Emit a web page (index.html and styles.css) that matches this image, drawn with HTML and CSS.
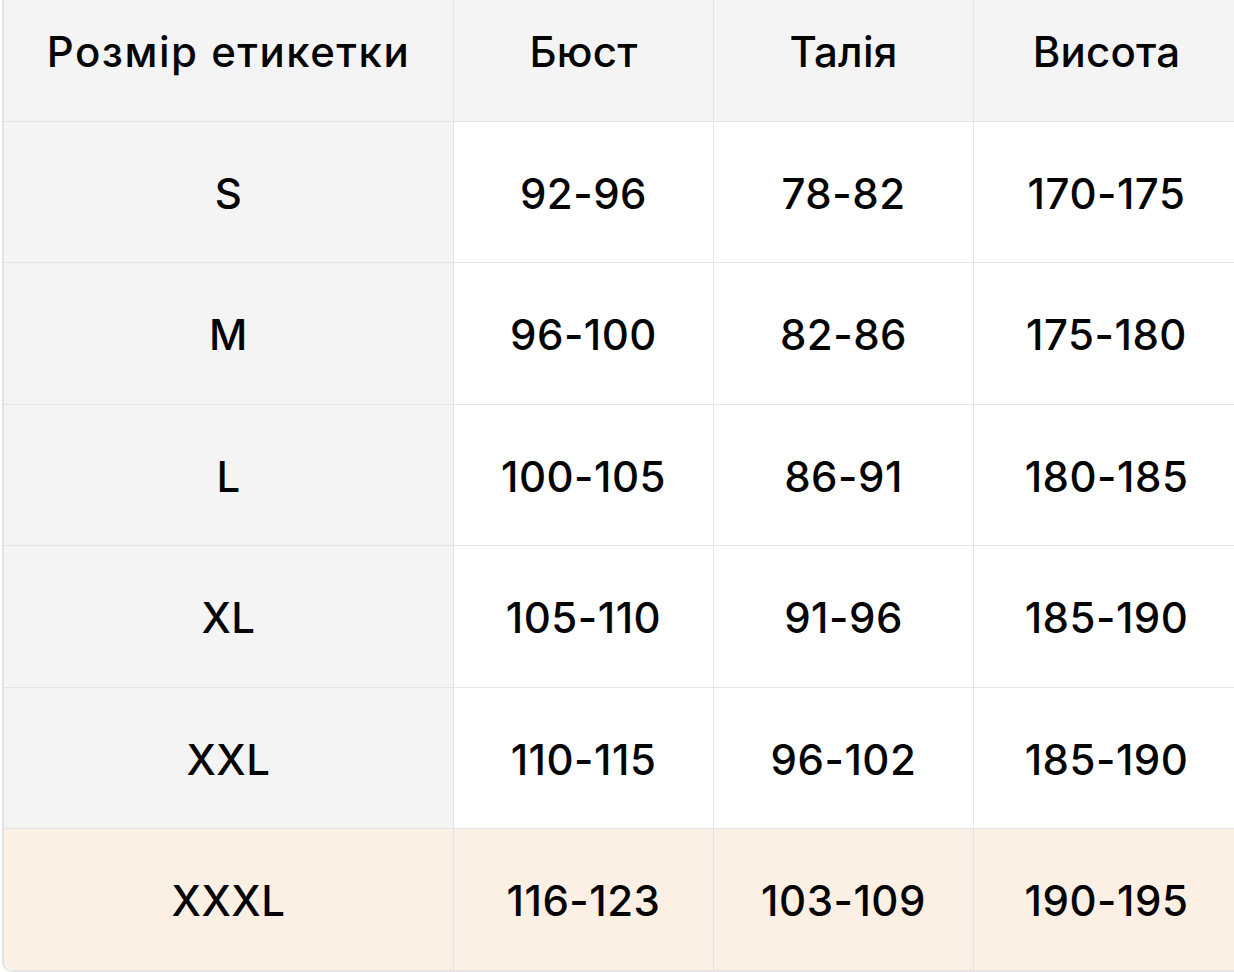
FILE: index.html
```html
<!DOCTYPE html>
<html lang="uk">
<head>
<meta charset="utf-8">
<title>Розмірна сітка</title>
<link rel="stylesheet" href="styles.css">
</head>
<body>
<div class="sheet">
  <div class="grid">
    <div class="cell head wide">Розмір етикетки</div>
    <div class="cell head">Бюст</div>
    <div class="cell head">Талія</div>
    <div class="cell head">Висота</div>

    <div class="cell label">S</div>
    <div class="cell">92-96</div>
    <div class="cell">78-82</div>
    <div class="cell">170-175</div>

    <div class="cell label">M</div>
    <div class="cell">96-100</div>
    <div class="cell">82-86</div>
    <div class="cell">175-180</div>

    <div class="cell label">L</div>
    <div class="cell">100-105</div>
    <div class="cell">86-91</div>
    <div class="cell">180-185</div>

    <div class="cell label">XL</div>
    <div class="cell">105-110</div>
    <div class="cell">91-96</div>
    <div class="cell">185-190</div>

    <div class="cell label">XXL</div>
    <div class="cell">110-115</div>
    <div class="cell">96-102</div>
    <div class="cell">185-190</div>

    <div class="cell label hl last">XXXL</div>
    <div class="cell hl last">116-123</div>
    <div class="cell hl last">103-109</div>
    <div class="cell hl last">190-195</div>
  </div>
</div>
</body>
</html>
```

FILE: styles.css
```css
html, body {
  margin: 0;
  padding: 0;
  background: #ffffff;
  overflow: hidden;
}

body {
  width: 1234px;
  height: 972px;
  font-family: "Inter", "Roboto", "Liberation Sans", sans-serif;
  color: #050505;
}

.sheet {
  margin-top: -20px;
  margin-left: 2px;
  width: 1236px;
  border-left: 2px solid #e2e2e2;
  border-bottom: 2px solid #e6e6e6;
  border-radius: 0 0 0 10px;
  overflow: hidden;
}

.grid {
  display: grid;
  grid-template-columns: 450px 260px 260px 266px;
  grid-template-rows: repeat(6, 141.5px) 140.5px;
}

.cell {
  box-sizing: border-box;
  display: flex;
  align-items: center;
  justify-content: center;
  border-right: 1px solid #e4e4e4;
  border-bottom: 1px solid #e4e4e4;
  background: #ffffff;
  font-size: 42px;
  font-weight: 500;
  letter-spacing: 0.5px;
  padding-top: 3px;
}

.head {
  background: #f4f4f4;
  letter-spacing: 0.2px;
}

.wide {
  letter-spacing: 1.5px;
}

.label {
  background: #f4f4f4;
}

.hl {
  background: #fcefe4;
}

.last {
  border-bottom: none;
}
```
